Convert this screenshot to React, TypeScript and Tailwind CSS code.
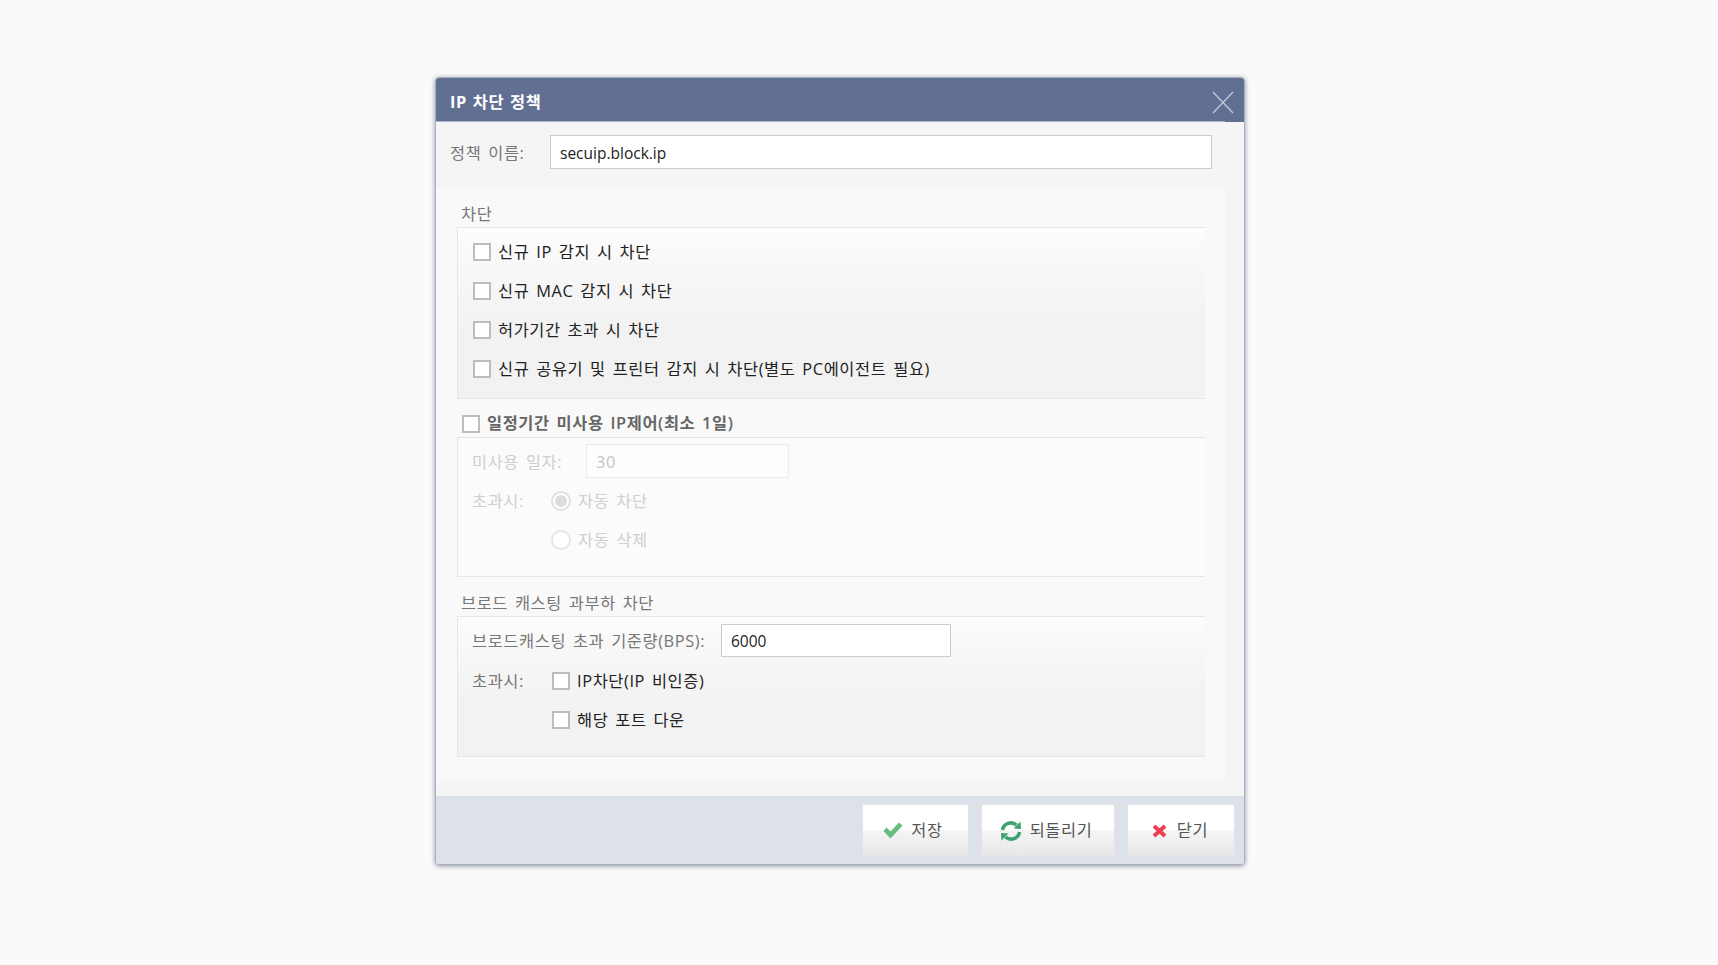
import { ReactNode } from "react";

const fontStack = "font-['Open_Sans','Noto_Sans_CJK_KR',sans-serif]";
const panelGradient = "bg-[linear-gradient(#fdfdfd_0%,#f9f9f9_15%,#f2f2f2_60%,#f2f2f2_100%)]";
const textBase = "text-[16.4px] tracking-[0.6px] [word-spacing:2px]";

function Check({ className = "" }: { className?: string }) {
  return <span className={`block w-[18px] h-[18px] shrink-0 bg-white border-2 border-[#bdbdbd] ${className}`} />;
}

function CheckRow({ label }: { label: string }) {
  return (
    <div className="h-[39px] flex items-center pl-[15px] gap-[7px]">
      <Check className="-mt-[1px]" />
      <span className={`${textBase} text-[#222]`}>{label}</span>
    </div>
  );
}

function Legend({ children }: { children: ReactNode }) {
  return (
    <div className={`h-[39px] pt-[13px] pl-[4px] leading-[26px] text-[#777] ${textBase}`}>
      {children}
    </div>
  );
}

function Fieldset({ className = "", children }: { className?: string; children: ReactNode }) {
  return <div className={`border border-r-0 border-[#e6e6e6] ${className}`}>{children}</div>;
}

function FooterButton({ icon, label, className }: { icon: ReactNode; label: string; className: string }) {
  return (
    <button className={`h-[53px] flex items-center justify-center border border-[#e3e3e3] bg-[linear-gradient(#ffffff_0%,#ffffff_50%,#f5f5f5_50%,#e7e7e7_100%)] text-[16.4px] tracking-[0.6px] text-[#555] ${className}`}>
      {icon}
      <span>{label}</span>
    </button>
  );
}

export default function App() {
  return (
    <div className={`min-h-[965px] bg-[#fafafa] pl-[435px] pt-[77px] ${fontStack}`}>
      <div className="w-[810px] h-[788px] flex flex-col rounded-[4px] overflow-hidden border border-[#a6aec0] bg-[#f5f5f5] shadow-[0_1px_5px_rgba(70,80,105,0.6)]">
        {/* 헤더 */}
        <div className="relative h-[44px] shrink-0 bg-[#616f92] flex items-center justify-between pl-[14px] pr-[10px]">
          <span className="pt-[4px] text-[16.4px] font-bold text-white tracking-[0.6px] [word-spacing:1px]">IP 차단 정책</span>
          <svg width="22" height="23" viewBox="0 0 22 23" className="mt-[5px]" aria-hidden="true">
            <path d="M1 1 L21 22 M21 1 L1 22" stroke="#c0c6d4" strokeWidth="1.4" fill="none" />
          </svg>
          <div className="absolute left-0 bottom-0 h-px w-[789px] bg-[#aab3c8]" />
        </div>

        {/* 정책 이름 */}
        <div className="h-[66px] shrink-0 pt-[13px] pl-[14px] flex items-start">
          <span className={`w-[100px] h-[34px] pt-[2px] flex items-center text-[#777] ${textBase}`}>정책 이름:</span>
          <div className="w-[662px] h-[34px] flex items-center pl-[9px] pt-[3px] bg-white border border-[#cccccc] text-[15.5px] text-[#222]">secuip.block.ip</div>
        </div>

        {/* 본문 */}
        <div className="w-[789px] h-[594px] shrink-0 bg-[#f9f9f9] pl-[21px] pr-[20px]">
          <Legend>차단</Legend>
          <Fieldset className={`h-[172px] pt-[5px] ${panelGradient}`}>
            <CheckRow label="신규 IP 감지 시 차단" />
            <CheckRow label="신규 MAC 감지 시 차단" />
            <CheckRow label="허가기간 초과 시 차단" />
            <CheckRow label="신규 공유기 및 프린터 감지 시 차단(별도 PC에이전트 필요)" />
          </Fieldset>

          <div className="h-[38px] pt-[11px] pl-[5px] flex items-center gap-[7px]">
            <Check />
            <span className={`font-semibold text-[#666] ${textBase}`}>일정기간 미사용 IP제어(최소 1일)</span>
          </div>
          <Fieldset className={`h-[140px] bg-[#fbfbfb] text-[#cfcfcf] ${textBase}`}>
            <div className="h-[44px] pt-[6px] pl-[14px] flex items-start">
              <span className="w-[114px] h-[34px] pt-[2px] flex items-center">미사용 일자:</span>
              <div className="w-[203px] h-[34px] pl-[9px] pt-[3px] flex items-center border border-[#ebebeb] bg-[#fdfdfd] text-[#c4c4c4]">30</div>
            </div>
            <div className="h-[39px] pl-[14px] flex items-center">
              <span className="w-[79px]">초과시:</span>
              <span className="w-[20px] h-[20px] mr-[7px] -mt-[1px] rounded-full border-2 border-[#e0e0e0] bg-white flex items-center justify-center">
                <span className="w-[12px] h-[12px] rounded-full bg-[#dcdcdc]" />
              </span>
              <span>자동 차단</span>
            </div>
            <div className="h-[39px] pl-[93px] flex items-center">
              <span className="w-[20px] h-[20px] mr-[7px] -mt-[1px] rounded-full border-2 border-[#e6e6e6] bg-white" />
              <span>자동 삭제</span>
            </div>
          </Fieldset>

          <Legend>브로드 캐스팅 과부하 차단</Legend>
          <Fieldset className={`h-[141px] ${textBase} ${panelGradient}`}>
            <div className="h-[44px] pt-[7px] pl-[14px] flex items-start">
              <span className="w-[249px] h-[33px] pt-[2px] flex items-center text-[#777]">브로드캐스팅 초과 기준량(BPS):</span>
              <div className="w-[230px] h-[33px] pl-[9px] pt-[3px] flex items-center bg-white border border-[#cccccc] text-[#222] text-[15.5px] tracking-normal">6000</div>
            </div>
            <div className="h-[39px] pl-[14px] flex items-center">
              <span className="w-[80px] pt-[1px] text-[#777]">초과시:</span>
              <Check className="mr-[7px]" />
              <span className="pt-[1px] text-[#222]">IP차단(IP 비인증)</span>
            </div>
            <div className="h-[39px] pl-[94px] flex items-center">
              <Check className="mr-[7px]" />
              <span className="pt-[1px] text-[#222]">해당 포트 다운</span>
            </div>
          </Fieldset>
        </div>

        <div className="flex-1" />

        {/* 하단 버튼 */}
        <div className="h-[68px] shrink-0 bg-[#dde1e9] pt-[8px] pr-[9px] flex justify-end gap-[12px]">
          <FooterButton
            className="w-[107px] gap-[8px] pr-[5px]"
            label="저장"
            icon={
              <svg width="20" height="17" viewBox="0 0 20 17" aria-hidden="true">
                <path d="M0.5 9 L3.5 5.5 L7.5 9.5 L16 0.5 L19.5 3.5 L7.5 16.5 Z" fill="#63bd7c" />
              </svg>
            }
          />
          <FooterButton
            className="w-[134px] gap-[8px] pr-[4px]"
            label="되돌리기"
            icon={
              <svg width="22" height="22" viewBox="0 0 22 22" aria-hidden="true">
                <path d="M2.5 10 A8.5 8.5 0 0 1 16.5 5" stroke="#3fa273" strokeWidth="3.6" fill="none" />
                <path d="M13.5 8.5 L21 9 L20.5 1.5 Z" fill="#3fa273" />
                <path d="M19.5 12 A8.5 8.5 0 0 1 5.5 17" stroke="#3fa273" strokeWidth="3.6" fill="none" />
                <path d="M8.5 13.5 L1 13 L1.5 20.5 Z" fill="#3fa273" />
              </svg>
            }
          />
          <FooterButton
            className="w-[108px] gap-[10px] pr-[2px]"
            label="닫기"
            icon={
              <svg width="15" height="14" viewBox="0 0 15 14" aria-hidden="true">
                <path d="M2 2 L13 12 M13 2 L2 12" stroke="#f04050" strokeWidth="4" fill="none" />
              </svg>
            }
          />
        </div>
      </div>
    </div>
  );
}
